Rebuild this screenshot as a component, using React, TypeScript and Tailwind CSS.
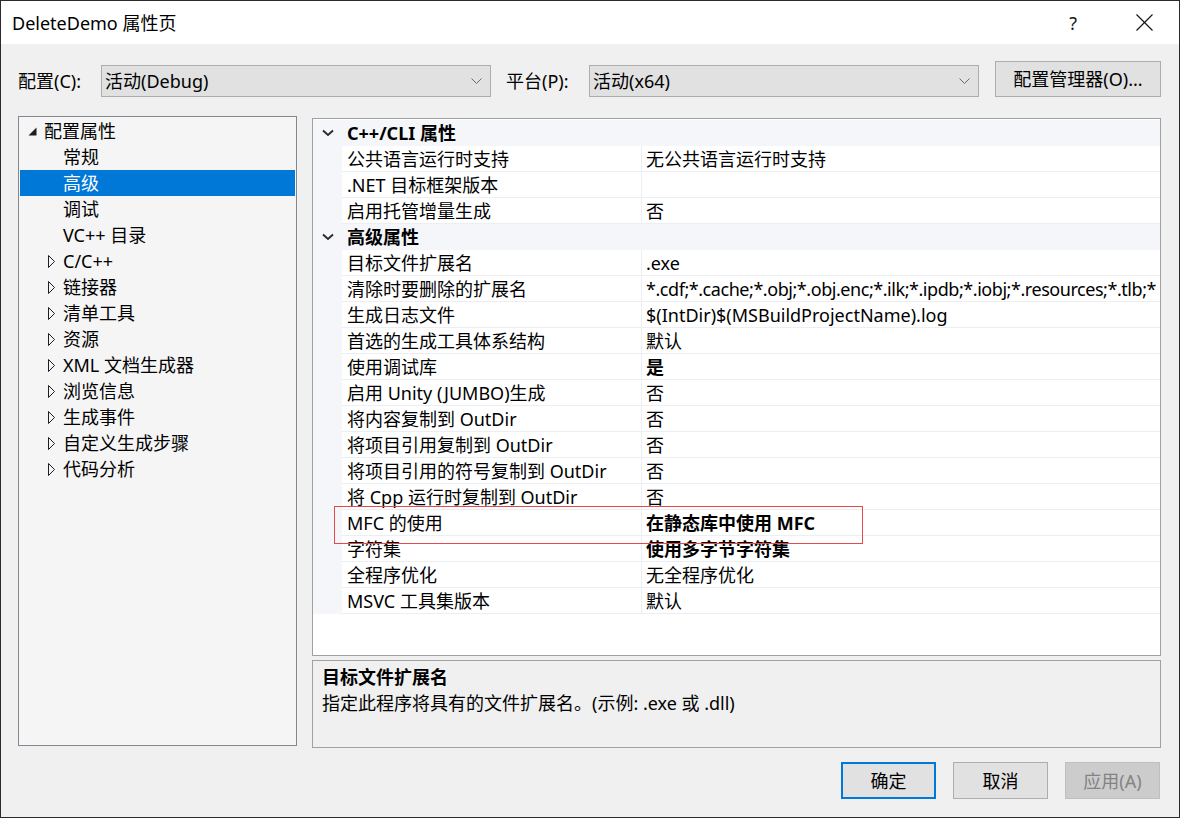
import React from "react";

const FONT = { fontFamily: '"Noto Sans", "Noto Sans CJK SC", sans-serif' };

function ComboChevron() {
  return (
    <svg width="11" height="7" viewBox="0 0 11 7" className="shrink-0">
      <polyline points="0.5,0.5 5.5,5.5 10.5,0.5" fill="none" stroke="#6a6a6a" strokeWidth="1" />
    </svg>
  );
}

function Combo({ text, width }: { text: string; width: string }) {
  return (
    <div className={`${width} h-[32px] bg-[#e1e1e1] border border-[#adadad] flex items-center pl-[3px] pr-[8px]`}>
      <span className="flex-1 text-[18px] leading-[24px] text-black whitespace-nowrap">{text}</span>
      <ComboChevron />
    </div>
  );
}

function ExpandedTri() {
  return (
    <svg width="9" height="9" viewBox="0 0 9 9" className="shrink-0">
      <path d="M8.5 0.5 L8.5 8.5 L0.5 8.5 Z" fill="#1e1e1e" />
    </svg>
  );
}

function CollapsedTri() {
  return (
    <svg width="8" height="13" viewBox="0 0 8 13" className="shrink-0">
      <path d="M0.5 0.5 L6.5 6.5 L0.5 12.5 Z" fill="none" stroke="#1e1e1e" strokeWidth="1" />
    </svg>
  );
}

function HeaderChevron() {
  return (
    <svg width="12" height="8" viewBox="0 0 12 8" className="shrink-0">
      <polyline points="1,1.5 6,6 11,1.5" fill="none" stroke="#2b2b2b" strokeWidth="2" />
    </svg>
  );
}

type Row =
  | { kind: "header"; name: string }
  | { kind: "prop"; name: string; value: string; bold?: boolean; tight?: boolean };

const rows: Row[] = [
  { kind: "header", name: "C++/CLI 属性" },
  { kind: "prop", name: "公共语言运行时支持", value: "无公共语言运行时支持" },
  { kind: "prop", name: ".NET 目标框架版本", value: "" },
  { kind: "prop", name: "启用托管增量生成", value: "否" },
  { kind: "header", name: "高级属性" },
  { kind: "prop", name: "目标文件扩展名", value: ".exe" },
  {
    kind: "prop",
    name: "清除时要删除的扩展名",
    value: "*.cdf;*.cache;*.obj;*.obj.enc;*.ilk;*.ipdb;*.iobj;*.resources;*.tlb;*",
    tight: true,
  },
  { kind: "prop", name: "生成日志文件", value: "$(IntDir)$(MSBuildProjectName).log" },
  { kind: "prop", name: "首选的生成工具体系结构", value: "默认" },
  { kind: "prop", name: "使用调试库", value: "是", bold: true },
  { kind: "prop", name: "启用 Unity (JUMBO)生成", value: "否" },
  { kind: "prop", name: "将内容复制到 OutDir", value: "否" },
  { kind: "prop", name: "将项目引用复制到 OutDir", value: "否" },
  { kind: "prop", name: "将项目引用的符号复制到 OutDir", value: "否" },
  { kind: "prop", name: "将 Cpp 运行时复制到 OutDir", value: "否" },
  { kind: "prop", name: "MFC 的使用", value: "在静态库中使用 MFC", bold: true },
  { kind: "prop", name: "字符集", value: "使用多字节字符集", bold: true },
  { kind: "prop", name: "全程序优化", value: "无全程序优化" },
  { kind: "prop", name: "MSVC 工具集版本", value: "默认" },
];

const treeChildren = ["常规", "高级", "调试", "VC++ 目录"];
const treeCollapsed = [
  "C/C++",
  "链接器",
  "清单工具",
  "资源",
  "XML 文档生成器",
  "浏览信息",
  "生成事件",
  "自定义生成步骤",
  "代码分析",
];

export default function App() {
  return (
    <div
      className="relative w-[1180px] h-[818px] border border-[#2b2b2b] bg-[#f0f0f0] flex flex-col text-black overflow-hidden"
      style={FONT}
    >
      {/* Title bar */}
      <div className="h-[43px] bg-white flex items-center shrink-0">
        <span className="ml-[11px] text-[18px] leading-[24px]">DeleteDemo 属性页</span>
        <div className="flex-1" />
        <span className="text-[18px] leading-[24px] text-[#1a1a1a] mr-[59px]">?</span>
        <svg width="17" height="17" viewBox="0 0 17 17" className="mr-[26px]">
          <line x1="0.5" y1="0.5" x2="16.5" y2="16.5" stroke="#111" strokeWidth="1.1" />
          <line x1="16.5" y1="0.5" x2="0.5" y2="16.5" stroke="#111" strokeWidth="1.1" />
        </svg>
      </div>

      {/* Config row */}
      <div className="mt-[17px] h-[36px] flex items-end shrink-0 pl-[17px]">
        <div className="h-[32px] flex items-center w-[83px]">
          <span className="text-[18px] leading-[24px] whitespace-nowrap">配置(C):</span>
        </div>
        <Combo text="活动(Debug)" width="w-[390px]" />
        <div className="h-[32px] flex items-center w-[98px] pl-[15px]">
          <span className="text-[18px] leading-[24px] whitespace-nowrap">平台(P):</span>
        </div>
        <Combo text="活动(x64)" width="w-[390px]" />
        <div className="ml-[16px] w-[166px] h-[36px] bg-[#e1e1e1] border border-[#adadad] flex items-center justify-center">
          <span className="text-[18px] leading-[24px] whitespace-nowrap">配置管理器(O)...</span>
        </div>
      </div>

      {/* Main area */}
      <div className="mt-[19px] flex pl-[17px] shrink-0">
        {/* Tree */}
        <div className="w-[279px] h-[630px] border border-[#828790] bg-[#f5f5f5] p-[1px] flex flex-col">
          <div className="h-[26px] flex items-center pl-[8px]">
            <ExpandedTri />
            <span className="ml-[7px] text-[18px] leading-[24px] whitespace-nowrap">配置属性</span>
          </div>
          {treeChildren.map((t) => (
            <div
              key={t}
              className={`h-[26px] flex items-center pl-[43px] ${t === "高级" ? "bg-[#0078d7] text-white" : ""}`}
            >
              <span className="text-[18px] leading-[24px] whitespace-nowrap">{t}</span>
            </div>
          ))}
          {treeCollapsed.map((t) => (
            <div key={t} className="h-[26px] flex items-center pl-[28px]">
              <CollapsedTri />
              <span className="ml-[7px] text-[18px] leading-[24px] whitespace-nowrap">{t}</span>
            </div>
          ))}
        </div>

        {/* Right column */}
        <div className="ml-[15px] mt-[2px] w-[849px] flex flex-col">
          {/* Property grid */}
          <div className="h-[538px] border border-[#a0a0a0] bg-white pt-[1px] flex flex-col overflow-hidden">
            {rows.map((r, i) =>
              r.kind === "header" ? (
                <div key={i} className="h-[26px] flex items-center bg-[#f4f6f9] shrink-0">
                  <div className="w-[29px] flex justify-center pl-[1px]">
                    <HeaderChevron />
                  </div>
                  <span className="ml-[5px] text-[18px] leading-[24px] font-bold whitespace-nowrap">{r.name}</span>
                </div>
              ) : (
                <div key={i} className="h-[26px] flex shrink-0">
                  <div className="w-[29px] bg-[#f4f6f9] shrink-0" />
                  <div className="w-[300px] shrink-0 border-b border-r border-[#eceef2] flex items-center pl-[5px] overflow-hidden">
                    <span className="text-[18px] leading-[24px] whitespace-nowrap">{r.name}</span>
                  </div>
                  <div className="flex-1 min-w-0 border-b border-[#eceef2] flex items-center pl-[4px] overflow-hidden">
                    <span
                      className={`text-[18px] leading-[24px] whitespace-nowrap ${r.bold ? "font-bold" : ""} ${
                        r.tight ? "tracking-[-0.45px]" : ""
                      }`}
                    >
                      {r.value}
                    </span>
                  </div>
                </div>
              )
            )}
          </div>

          {/* Description */}
          <div className="mt-[4px] h-[88px] border border-[#a0a0a0] bg-[#f0f0f0] pt-[3px] pl-[9px] flex flex-col">
            <div className="h-[26px] flex items-center">
              <span className="text-[18px] leading-[24px] font-bold">目标文件扩展名</span>
            </div>
            <div className="h-[26px] flex items-center">
              <span className="text-[18px] leading-[24px] whitespace-nowrap">
                指定此程序将具有的文件扩展名。(示例: .exe 或 .dll)
              </span>
            </div>
          </div>
        </div>
      </div>

      {/* Buttons */}
      <div className="mt-[14px] flex justify-end pr-[19px] gap-[17px]">
        <div className="w-[95px] h-[37px] border-2 border-[#0078d7] bg-[#e1e1e1] flex items-center justify-center">
          <span className="text-[18px] leading-[24px]">确定</span>
        </div>
        <div className="w-[95px] h-[37px] border border-[#adadad] bg-[#e1e1e1] flex items-center justify-center">
          <span className="text-[18px] leading-[24px]">取消</span>
        </div>
        <div className="w-[95px] h-[37px] border border-[#bfbfbf] bg-[#cccccc] flex items-center justify-center">
          <span className="text-[18px] leading-[24px] text-[#838383]">应用(A)</span>
        </div>
      </div>

      {/* Red highlight box */}
      <div className="absolute left-[333px] top-[505px] w-[529px] h-[38px] border border-[#e5484d] pointer-events-none" />
    </div>
  );
}
